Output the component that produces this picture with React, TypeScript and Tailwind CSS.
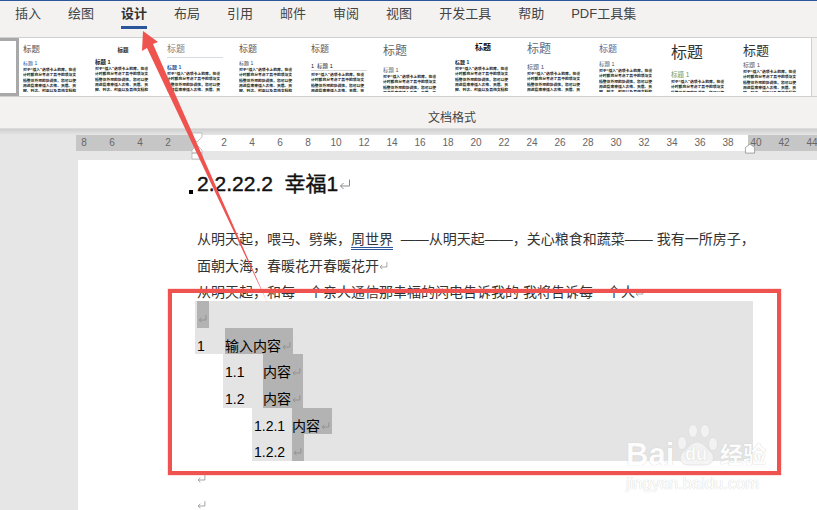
const tabs = ["插入", "绘图", "设计", "布局", "引用", "邮件", "审阅", "视图", "开发工具", "帮助", "PDF工具集"];

const body =
  "对于“插入”选项卡上的库，在设计时都充分考虑了其中的项与文档整体外观的协调性。您可以使用这些库来插入表格、页眉、页脚、列表、封面以及其他文档构建基块。";

const styles = [
  { title: "text-[8.5px] leading-[14px] text-[#555] mt-[3px]", h: "标题 1", hc: "text-[5px] text-[#2b579a] mt-[4px]" },
  { title: "text-[5.5px] font-bold leading-[14px] text-center text-[#222] mt-[4px]", h: "标题 1", hc: "text-[5.5px] font-bold text-[#111] mt-[2px]" },
  { title: "text-[9px] leading-[14px] text-[#808080] mt-[3px] border-b border-[#d5dce4] pb-[1px]", h: "标题 1", hc: "text-[5px] font-bold text-[#2b579a] mt-[6px]" },
  { title: "text-[9px] leading-[14px] text-[#555] mt-[3px]", h: "标题 1", hc: "text-[5px] text-[#444] mt-[4px]" },
  { title: "text-[9px] leading-[14px] text-[#555] mt-[3px]", h: "1  标题 1", hc: "text-[5.5px] text-[#111] mt-[7px] border-b border-[#d8d8d8] pb-[1px]" },
  { title: "text-[12px] leading-[16px] text-[#666] mt-[4px]", h: "标题 1", hc: "text-[5.5px] text-[#555] mt-[8px]" },
  { title: "text-[8px] font-bold leading-[14px] text-center text-[#111] mt-[2px]", h: "标题 1", hc: "text-[5px] font-bold text-[#222] mt-[4px]" },
  { title: "text-[12px] leading-[16px] text-[#5b6b82] mt-[2px]", h: "标题 1", hc: "text-[6px] text-[#44546a] mt-[7px]" },
  { title: "text-[9px] leading-[14px] text-[#4a6a9c] mt-[3px]", h: "标题 1", hc: "text-[5.5px] text-[#44546a] mt-[5px]" },
  { title: "text-[16px] leading-[20px] text-[#333] mt-[4px]", h: "标题 1", hc: "text-[6.5px] text-[#6f9a5f] mt-[9px]" },
  { title: "text-[13px] leading-[16px] text-[#333] mt-[4px]", h: "标题 1", hc: "text-[6px] text-[#555] mt-[3px]" },
];

const rows = [
  { indent: "w-0", num: "w-[2px]", mark: "w-[12px]", label: "", text: "" },
  { indent: "w-0", num: "w-[30px]", mark: "w-[68px]", label: "1", text: "输入内容" },
  { indent: "w-[28px]", num: "w-[40px]", mark: "w-[40px]", label: "1.1", text: "内容" },
  { indent: "w-[28px]", num: "w-[40px]", mark: "w-[40px]", label: "1.2", text: "内容" },
  { indent: "w-[57px]", num: "w-[40px]", mark: "w-[40px]", label: "1.2.1", text: "内容" },
  { indent: "w-[57px]", num: "w-[40px]", mark: "w-[12px]", label: "1.2.2", text: "" },
];

function Ret({ className }: { className: string }) {
  return (
    <svg viewBox="0 0 12 12" fill="none" stroke="#8a8a8a" strokeWidth="1" className={className}>
      <path d="M10.5 1.5v6.5H1.5M4.5 5l-3 3 3 3" />
    </svg>
  );
}

function Thumb({ s }: { s: (typeof styles)[number] }) {
  return (
    <div className="w-[72px] h-full shrink-0 pl-[4px] pr-[12px] pt-[1px] pb-[4px] overflow-hidden">
      <div className="h-full overflow-hidden">
        <div className={`whitespace-nowrap ${s.title}`}>标题</div>
        <div className={`leading-[6px] whitespace-pre ${s.hc}`}>{s.h}</div>
        <p className="text-[3.8px] leading-[5.3px] text-[#222] font-bold mt-[2px]">{body}</p>
      </div>
    </div>
  );
}

function RulerNum({ n }: { n?: number }) {
  return <span className="w-[28px] shrink-0 text-center text-[10px] text-[#666]">{n}</span>;
}

function Watermark() {
  return (
    <div className="absolute left-[622px] top-[424px] w-[160px] h-[72px] text-white [text-shadow:0_0_1px_#bbb] opacity-90">
      <span className="absolute left-[4px] top-[13px] text-[31px] leading-[36px] font-bold font-['Liberation_Sans']">Bai</span>
      <svg viewBox="0 0 50 46" className="absolute left-[50px] top-0 w-[50px] h-[46px]" fill="#f4f4f4" stroke="#d8d8d8" strokeWidth="0.6">
        <ellipse cx="10" cy="19" rx="4.5" ry="6.5" />
        <ellipse cx="21" cy="7" rx="4.5" ry="6.5" />
        <ellipse cx="33" cy="7" rx="4.5" ry="6.5" />
        <ellipse cx="41" cy="20" rx="4.5" ry="6.5" />
        <path d="M25 18c6 0 9 6 14 10 5 5 2 13-6 13H16C8 41 6 33 11 28c5-3 8-10 14-10z" />
      </svg>
      <span className="absolute left-[63px] top-[18px] text-[18px] leading-[24px] font-bold font-['Liberation_Sans']">du</span>
      <span className="absolute left-[98px] top-[15px] text-[23px] leading-[32px] font-bold">经验</span>
      <span className="absolute left-[4px] top-[49px] text-[16.5px] leading-[20px] font-['Liberation_Sans']">jingyan.baidu.com</span>
    </div>
  );
}

export default function App() {
  return (
    <div className="relative w-[817px] h-[510px] overflow-hidden bg-[#e6e6e6] font-['Liberation_Sans','Noto_Sans_CJK_SC',sans-serif] flex flex-col">
      <div className="h-[1px] shrink-0 bg-[#2b579a]" />

      {/* ribbon tabs */}
      <div className="h-[36px] shrink-0 bg-[#f3f2f1] flex gap-[27px] pl-[15px] text-[13px] text-[#444]">
        {tabs.map((t) => (
          <div key={t} className={`h-[28px] flex items-center border-b-[3px] ${t === "设计" ? "border-[#2b579a] font-bold text-[#333]" : "border-transparent"}`}>
            {t}
          </div>
        ))}
      </div>

      {/* style gallery */}
      <div className="h-[60px] shrink-0 flex bg-white border-y border-[#d2d0ce]">
        <div className="w-[19px] h-full shrink-0 bg-white border-y-[3px] border-r-[3px] border-[#a8a8a8]" />
        {styles.map((s, i) => (
          <Thumb key={i} s={s} />
        ))}
        <div className="flex-1 bg-[#f3f2f1] border-l border-[#d2d0ce]" />
      </div>

      <div className="h-[32px] shrink-0 bg-[#f3f2f1] flex items-center justify-center pl-[87px] pt-[10px] text-[12px] text-[#444] border-b border-[#dcdcdc]">
        文档格式
      </div>
      <div className="h-[6px] shrink-0 bg-gradient-to-b from-[#cfcfcf] to-[#e6e6e6]" />

      {/* ruler */}
      <div className="h-[16px] shrink-0 flex ml-[76px] leading-[16px]">
        <div className="w-[119px] shrink-0 bg-[#c6c6c6] flex overflow-hidden">
          <div className="flex -ml-[6px]">
            {[8, 6, 4, 2].map((n) => (
              <RulerNum key={n} n={n} />
            ))}
          </div>
        </div>
        <div className="w-[553px] shrink-0 bg-white flex pl-[15px]">
          {[2, 4, 6, 8, 10, 12, 14, 16, 18, 20, 22, 24, 26, 28, 30, 32, 34, 36, 38].map((n) => (
            <RulerNum key={n} n={n} />
          ))}
        </div>
        <div className="flex-1 bg-[#c6c6c6] flex overflow-hidden">
          <div className="flex -ml-[6px]">
            {[40, 42, 44].map((n) => (
              <RulerNum key={n} n={n} />
            ))}
          </div>
        </div>
      </div>
      <div className="h-[9px] shrink-0" />

      {/* page */}
      <div className="flex-1 ml-[78px] bg-white pl-[119px] text-[14px] text-[#333]">
        <div className="pt-[12px] h-[66px]">
          <h1 className="flex items-center text-[21px] leading-[24px] font-normal text-[#111] whitespace-pre [-webkit-text-stroke:0.4px_#111]">
            2.2.22.2  幸福1
            <Ret className="w-[12px] h-[12px] ml-[1px]" />
          </h1>
        </div>
        <p className="leading-[26.5px] whitespace-pre">
          从明天起，喂马、劈柴，
          <span className="border-b-[3px] border-double border-[#2b579a]">周世界</span>
          {"  ——从明天起——，关心粮食和蔬菜—— 我有一所房子，"}
        </p>
        <p className="leading-[26.5px] flex items-center whitespace-nowrap">
          面朝大海，春暖花开春暖花开
          <Ret className="w-[9px] h-[9px]" />
        </p>
        <p className="leading-[26.5px] h-[22px] flex items-start whitespace-nowrap">
          从明天起，和每一个亲人通信那幸福的闪电告诉我的 我将告诉每一个人
          <Ret className="w-[9px] h-[9px] mt-[9px]" />
        </p>

        <div className="w-[558px] -ml-[2px] text-[#000]">
          {rows.map((r, i) => (
            <div key={i} className="flex h-[26.67px] leading-[36px]">
              <div className={`${r.indent} shrink-0`} />
              <div className={`${r.num} shrink-0 bg-[#e4e4e4] pl-[2px]`}>{r.label}</div>
              <div className={`${r.mark} shrink-0 bg-[#b3b3b3] flex items-start`}>
                {r.text}
                <Ret className="w-[9px] h-[9px] shrink-0 ml-[1px] mt-[13px]" />
              </div>
              <div className="flex-1 bg-[#e4e4e4]" />
            </div>
          ))}
        </div>
        <div className="h-[26.67px] flex items-center pt-[8px]">
          <Ret className="w-[9px] h-[9px]" />
        </div>
        <div className="h-[26.67px] flex items-center pt-[8px]">
          <Ret className="w-[9px] h-[9px]" />
        </div>
      </div>

      {/* ruler indent markers */}
      <svg viewBox="0 0 12 28" className="absolute left-[191px] top-[132px] w-[12px] h-[28px]" fill="#fff" stroke="#aaa" strokeWidth="0.7">
        <path d="M1 1h10v4l-5 5-5-5z" />
        <path d="M1 18l5-5 5 5v3H1zM1 21h10v6H1z" />
      </svg>
      <svg viewBox="0 0 12 12" className="absolute left-[744px] top-[143px] w-[12px] h-[11px]" fill="#fff" stroke="#888" strokeWidth="0.8">
        <path d="M1 5l5-4 5 4v6H1z" />
      </svg>

      {/* heading paragraph mark */}
      <div className="absolute left-[189px] top-[190px] w-[4px] h-[4px] bg-black" />

      <Watermark />

      {/* annotation box + arrow */}
      <div className="absolute left-[168px] top-[289px] w-[613px] h-[186px] border-[4px] border-[#ef5350] shadow-[0_0_1px_#ef5350]" />
      <svg viewBox="0 0 817 510" className="absolute inset-0 w-[817px] h-[510px] pointer-events-none">
        <polygon points="143,31 158,42 153,44 268,304 147,48 142,51" fill="#ef5350" />
      </svg>
    </div>
  );
}
